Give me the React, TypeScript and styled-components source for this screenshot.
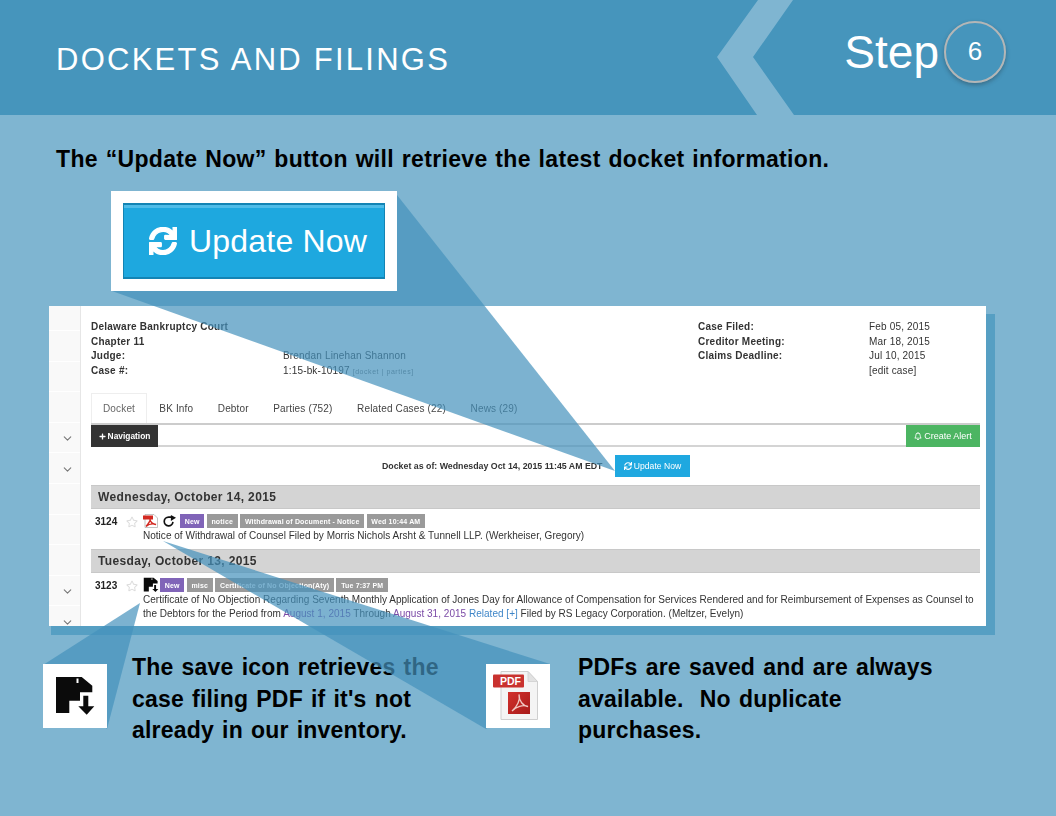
import React from "react";
import styled, { createGlobalStyle } from "styled-components";
import { FaSync, FaPlus, FaRegBell, FaRegStar } from "react-icons/fa";
import { ChevronDown } from "lucide-react";

const Global = createGlobalStyle`
  html, body { margin: 0; padding: 0; background: #7fb5d1; }
  * { box-sizing: border-box; }
  body { font-family: "Liberation Sans", Arial, sans-serif; }
`;

const Page = styled.div`
  position: relative;
  isolation: isolate;
  width: 1056px;
  height: 816px;
  overflow: hidden;
  background: #7fb5d1;
  display: flex;
  flex-direction: column;
`;

const Callouts = styled.svg`
  position: absolute;
  inset: 0;
  z-index: 1;
  pointer-events: none;
`;

const Header = styled.header`
  position: relative;
  height: 115px;
  flex: none;
  background: #4695bc;
  display: flex;
  align-items: center;
  justify-content: space-between;
  padding: 0 50px 0 56px;
`;

const Chevron = styled.svg`
  position: absolute;
  left: 0;
  top: 0;
`;

const Title = styled.h1`
  margin: 0;
  padding-top: 5px;
  font-size: 31px;
  font-weight: 400;
  letter-spacing: 2.25px;
  color: #fff;
`;

const StepGroup = styled.div`
  position: relative;
  display: flex;
  align-items: center;
  gap: 5px;
  margin-top: -10px;
`;

const StepLabel = styled.span`
  font-size: 46px;
  color: #fff;
  line-height: 53px;
`;

const StepCircle = styled.span`
  width: 62px;
  height: 62px;
  border-radius: 50%;
  border: 2px solid #b4b6b6;
  box-shadow: 0 2px 4px rgba(40, 60, 70, 0.45);
  color: #fff;
  font-size: 26px;
  display: flex;
  align-items: center;
  justify-content: center;
  margin-top: -2px;
`;

const Instruction = styled.p`
  margin: 30px 0 0 56px;
  font-size: 23px;
  line-height: 28px;
  font-weight: 700;
  color: #000;
  letter-spacing: 0.34px;
  word-spacing: 1px;
  white-space: nowrap;
`;

const HeroBox = styled.div`
  position: relative;
  z-index: 2;
  margin: 18px 0 0 111px;
  width: 286px;
  height: 100px;
  padding: 12px;
  background: #fff;
`;

const HeroButton = styled.div`
  height: 76px;
  background: #1ea8df;
  border: 1px solid #1384b4;
  border-top-width: 2px;
  border-bottom-width: 2px;
  box-shadow: inset 0 3px 0 #4fbce8;
  display: flex;
  align-items: center;
  gap: 12px;
  padding: 0 0 0 25px;
  color: #fff;
  font-size: 32px;
  letter-spacing: 0.2px;
  svg path {
    stroke: currentColor;
    stroke-width: 24px;
  }
`;

const PanelFrame = styled.section`
  position: relative;
  margin: 15px 0 0 49px;
  width: 937px;
  height: 320px;
  &::before {
    content: "";
    position: absolute;
    z-index: -1;
    left: 2px;
    top: 8px;
    right: -9px;
    bottom: -9px;
    background: #569fc3;
  }
`;

const Panel = styled.div`
  height: 100%;
  background: #fff;
  display: flex;
  overflow: hidden;
  filter: blur(0.35px);
  font-size: 10px;
  color: #333;
`;

const Rail = styled.div`
  width: 32px;
  flex: none;
  background: #f9f9f9;
  border-right: 1px solid #e6e6e6;
`;

const RailRow = styled.div<{ $first?: boolean }>`
  height: ${(p) => (p.$first ? 25 : 30.6)}px;
  border-bottom: 1px solid #fff;
  display: flex;
  align-items: center;
  justify-content: center;
  padding: 2px 0 0 6px;
  color: #777;
`;

const Main = styled.div`
  flex: 1;
  min-width: 0;
  padding: 14px 6px 0 10px;
`;

const Meta = styled.div`
  display: grid;
  grid-template-columns: 192px 415px 171px 1fr;
  line-height: 14.6px;
  letter-spacing: 0.17px;
`;

const MetaLabel = styled.div`
  font-weight: 700;
  letter-spacing: 0.24px;
`;

const TinyLinks = styled.span`
  font-size: 7px;
  color: #777;
  letter-spacing: 0.55px;
`;

const Tabs = styled.nav`
  margin-top: 14px;
  height: 30px;
  display: flex;
`;

const Tab = styled.div<{ $active?: boolean }>`
  padding: 0 12.3px;
  display: flex;
  align-items: center;
  letter-spacing: 0.15px;
  color: ${(p) => (p.$active ? "#666" : "#444")};
  ${(p) => (p.$active ? "border: 1px solid #eee; border-bottom: 0; padding: 0 11px;" : "")}
`;

const Toolbar = styled.div`
  height: 24px;
  border-top: 2px solid #ccc;
  border-bottom: 2px solid #d4d4d4;
  display: flex;
  justify-content: space-between;
  align-items: stretch;
`;

const ToolButton = styled.div<{ $bg: string; $w: number; $bold?: boolean }>`
  width: ${(p) => p.$w}px;
  margin-bottom: -2px;
  background: ${(p) => p.$bg};
  color: #fff;
  font-size: ${(p) => (p.$bold ? 8.4 : 9)}px;
  font-weight: ${(p) => (p.$bold ? 700 : 400)};
  display: flex;
  align-items: center;
  justify-content: center;
  gap: 2px;
`;

const AsOfRow = styled.div`
  height: 38px;
  display: flex;
  align-items: center;
  padding: 0 0 0 291px;
  font-size: 8.8px;
  font-weight: 700;
`;

const AsOfText = styled.span`
  width: 233px;
`;

const UpdateButton = styled.div`
  width: 75px;
  height: 22px;
  background: #1fa8e0;
  color: #fff;
  font-weight: 400;
  display: flex;
  align-items: center;
  justify-content: center;
  gap: 2px;
  font-size: 8.6px;
`;

const DayBar = styled.div`
  height: 24px;
  background: #d4d4d4;
  border-top: 1px solid #c8c8c8;
  border-bottom: 1px solid #c8c8c8;
  padding-left: 7px;
  display: flex;
  align-items: center;
  font-size: 12px;
  font-weight: 700;
  letter-spacing: 0.37px;
`;

const Entry = styled.article<{ $gap: number }>`
  padding: 5px 0 ${(p) => p.$gap}px 4px;
`;

const EntryHead = styled.div`
  display: flex;
  align-items: center;
  height: 14px;
`;

const EntryNumber = styled.span`
  width: 31px;
  font-size: 10px;
  font-weight: 700;
  color: #222;
`;

const StarCell = styled.span`
  width: 17px;
  display: flex;
  color: #ddd;
  padding-top: 2px;
`;

const IconCell = styled.svg`
  flex: none;
  display: block;
`;

const Badge = styled.span<{ $purple?: boolean }>`
  height: 14px;
  margin-right: 2.5px;
  padding: 0 4.7px;
  background: ${(p) => (p.$purple ? "#8064b8" : "#9a9a9a")};
  color: #fff;
  font-size: 7px;
  font-weight: 700;
  letter-spacing: 0.16px;
  display: flex;
  align-items: center;
  white-space: nowrap;
`;

const EntryText = styled.p`
  margin: 1px 0 0 48px;
  line-height: 14px;
  font-size: 10px;
  letter-spacing: 0.02px;
  color: #333;
  white-space: nowrap;
`;

const EntryLink = styled.span<{ $c: string }>`
  color: ${(p) => p.$c};
`;

const Notes = styled.div`
  position: relative;
  margin-top: 38px;
  display: flex;
`;

const Note = styled.div<{ $w: number; $ml: number; $gap: number }>`
  width: ${(p) => p.$w}px;
  margin-left: ${(p) => p.$ml}px;
  display: flex;
  gap: ${(p) => p.$gap}px;
  align-items: flex-start;
`;

const NoteIconBox = styled.div`
  position: relative;
  z-index: 2;
  flex: none;
  width: 64px;
  height: 64px;
  background: #fff;
`;

const NoteText = styled.p`
  margin: -12px 0 0 0;
  font-size: 23px;
  line-height: 31.5px;
  font-weight: 700;
  color: #000;
  white-space: nowrap;
  letter-spacing: 0.2px;
  word-spacing: 1.5px;
`;

const SmallPdf = () => (
  <IconCell width="16" height="14" viewBox="0 0 16 14" style={{ marginRight: 4 }}>
    <path d="M2 0.5H11L14.5 4V13.5H2Z" fill="#fff" stroke="#aaa" strokeWidth="0.7" />
    <rect x="0" y="1.5" width="10" height="4" fill="#d32a22" />
    <path d="M3 12.5C6 9 7.5 6 7 5C7 8 10 10.500 13 10.500C10 9.500 6 10 3 12.500Z" fill="none" stroke="#d32a22" strokeWidth="1.4" />
  </IconCell>
);

const Redo = () => (
  <IconCell width="13" height="14" viewBox="0 0 14 14" style={{ marginRight: 4 }}>
    <path d="M9 2.800H6A4.700 4.700 0 1 0 10.700 8" fill="none" stroke="#111" strokeWidth="1.800" />
    <path d="M8.500 0.500L14 3.500L8.500 7Z" fill="#111" />
  </IconCell>
);

const SaveGlyph = ({ size, viewBox, gap = 0 }: { size: number; viewBox: string; gap?: number }) => (
  <IconCell width={size} height={size} viewBox={viewBox} style={{ marginRight: gap }}>
    <path
      fillRule="evenodd"
      d="M13 13H38.700L49.300 21.700V28.300H37V36.700H26.300V49H13ZM33.500 14.500V19H35.500V14.500Z"
      fill="#0b0b0b"
    />
    <path d="M40.300 31.700H45.300V42.300H51.300L43.700 50.700L35.300 42.300H40.300Z" fill="#0b0b0b" />
  </IconCell>
);

const PdfDoc = () => (
  <IconCell width="64" height="64" viewBox="0 0 64 64">
    <defs>
      <linearGradient id="redSq" x1="0" y1="0" x2="1" y2="1">
        <stop offset="0" stopColor="#d2312c" />
        <stop offset="1" stopColor="#a81b1a" />
      </linearGradient>
    </defs>
    <path d="M15 7.500H42L51.500 17.500V55.500H15Z" fill="#f4f4f4" stroke="#cfcfcf" strokeWidth="1" />
    <path d="M42 7.500V17.500H51.500Z" fill="#e2e2e2" stroke="#cfcfcf" strokeWidth="0.800" />
    <rect x="7" y="10.500" width="31" height="13" rx="1" fill="#c9322f" />
    <text x="14" y="21" fontSize="10.500" fontWeight="700" fill="#fff" fontFamily="Liberation Sans, Arial, sans-serif">PDF</text>
    <rect x="22" y="28" width="22" height="22" fill="url(#redSq)" />
    <path
      d="M26 47C31 43 34.500 36 33 30.500C33 37 37 42 42 42.500C37 40.500 30 42.500 26 47Z"
      fill="none"
      stroke="#f1c9c4"
      strokeWidth="1.300"
    />
  </IconCell>
);

const railRows = [0, 1, 2, 3, 4, 5, 6, 7, 8, 9, 10];
const chevronRows = new Set([4, 5, 9, 10]);

export default function App() {
  return (
    <Page>
      <Global />
      <Header>
        <Chevron width="1056" height="115" viewBox="0 0 1056 115">
          <polygon points="758,0 793,0 753,57 794,115 757,115 717,57" fill="#7fb5d1" />
        </Chevron>
        <Title>DOCKETS AND FILINGS</Title>
        <StepGroup>
          <StepLabel>Step</StepLabel>
          <StepCircle>6</StepCircle>
        </StepGroup>
      </Header>

      <Instruction>The “Update Now” button will retrieve the latest docket information.</Instruction>

      <HeroBox>
        <HeroButton>
          <FaSync size={28} />
          <span>Update Now</span>
        </HeroButton>
      </HeroBox>

      <PanelFrame>
        <Panel>
          <Rail>
            {railRows.map((r) => (
              <RailRow key={r} $first={r === 0}>
                {chevronRows.has(r) && <ChevronDown size={13} strokeWidth={2} />}
              </RailRow>
            ))}
          </Rail>
          <Main>
            <Meta>
              <MetaLabel>Delaware Bankruptcy Court</MetaLabel>
              <div />
              <MetaLabel>Case Filed:</MetaLabel>
              <div>Feb 05, 2015</div>
              <MetaLabel>Chapter 11</MetaLabel>
              <div />
              <MetaLabel>Creditor Meeting:</MetaLabel>
              <div>Mar 18, 2015</div>
              <MetaLabel>Judge:</MetaLabel>
              <div>Brendan Linehan Shannon</div>
              <MetaLabel>Claims Deadline:</MetaLabel>
              <div>Jul 10, 2015</div>
              <MetaLabel>Case #:</MetaLabel>
              <div>
                1:15-bk-10197 <TinyLinks>[docket | parties]</TinyLinks>
              </div>
              <div />
              <div>[edit case]</div>
            </Meta>

            <Tabs>
              <Tab $active>Docket</Tab>
              <Tab>BK Info</Tab>
              <Tab>Debtor</Tab>
              <Tab>Parties (752)</Tab>
              <Tab>Related Cases (22)</Tab>
              <Tab>News (29)</Tab>
            </Tabs>

            <Toolbar>
              <ToolButton $bg="#333" $w={67} $bold>
                <FaPlus size={7} />
                Navigation
              </ToolButton>
              <ToolButton $bg="#4cb562" $w={74}>
                <FaRegBell size={8} />
                Create Alert
              </ToolButton>
            </Toolbar>

            <AsOfRow>
              <AsOfText>Docket as of: Wednesday Oct 14, 2015 11:45 AM EDT</AsOfText>
              <UpdateButton>
                <FaSync size={8} />
                Update Now
              </UpdateButton>
            </AsOfRow>

            <DayBar>Wednesday, October 14, 2015</DayBar>
            <Entry $gap={6}>
              <EntryHead>
                <EntryNumber>3124</EntryNumber>
                <StarCell><FaRegStar size={12} /></StarCell>
                <SmallPdf />
                <Redo />
                <Badge $purple>New</Badge>
                <Badge>notice</Badge>
                <Badge>Withdrawal of Document - Notice</Badge>
                <Badge>Wed 10:44 AM</Badge>
              </EntryHead>
              <EntryText>
                Notice of Withdrawal of Counsel Filed by Morris Nichols Arsht &amp; Tunnell LLP. (Werkheiser, Gregory)
              </EntryText>
            </Entry>

            <DayBar>Tuesday, October 13, 2015</DayBar>
            <Entry $gap={0}>
              <EntryHead>
                <EntryNumber>3123</EntryNumber>
                <StarCell><FaRegStar size={12} /></StarCell>
                <SaveGlyph size={16} viewBox="11 11 42 42" gap={1} />
                <Badge $purple>New</Badge>
                <Badge>misc</Badge>
                <Badge>Certificate of No Objection(Aty)</Badge>
                <Badge>Tue 7:37 PM</Badge>
              </EntryHead>
              <EntryText>
                Certificate of No Objection Regarding Seventh Monthly Application of Jones Day for Allowance of Compensation for Services Rendered and for Reimbursement of Expenses as Counsel to
                <br />
                the Debtors for the Period from <EntryLink $c="#7b4aa6">August 1, 2015</EntryLink> Through{" "}
                <EntryLink $c="#7b4aa6">August 31, 2015</EntryLink> <EntryLink $c="#3f86c8">Related [+]</EntryLink> Filed by RS Legacy Corporation. (Meltzer, Evelyn)
              </EntryText>
            </Entry>
          </Main>
        </Panel>
      </PanelFrame>

      <Notes>
        <Note $ml={43} $w={443} $gap={25}>
          <NoteIconBox><SaveGlyph size={64} viewBox="0 0 64 64" /></NoteIconBox>
          <NoteText>The save icon retrieves the<br />case filing PDF if it's not<br />already in our inventory.</NoteText>
        </Note>
        <Note $ml={0} $w={520} $gap={28}>
          <NoteIconBox><PdfDoc /></NoteIconBox>
          <NoteText>PDFs are saved and are always<br />available.&nbsp; No duplicate<br />purchases.</NoteText>
        </Note>
      </Notes>

      <Callouts width="1056" height="816" viewBox="0 0 1056 816">
        <g fill="rgb(68,146,188)" fillOpacity="0.7">
          <polygon points="397,195 615,471 112,291" />
          <polygon points="163,541 550,664 486,729" />
          <polygon points="140,603 43,665 107,729" />
        </g>
      </Callouts>
    </Page>
  );
}
